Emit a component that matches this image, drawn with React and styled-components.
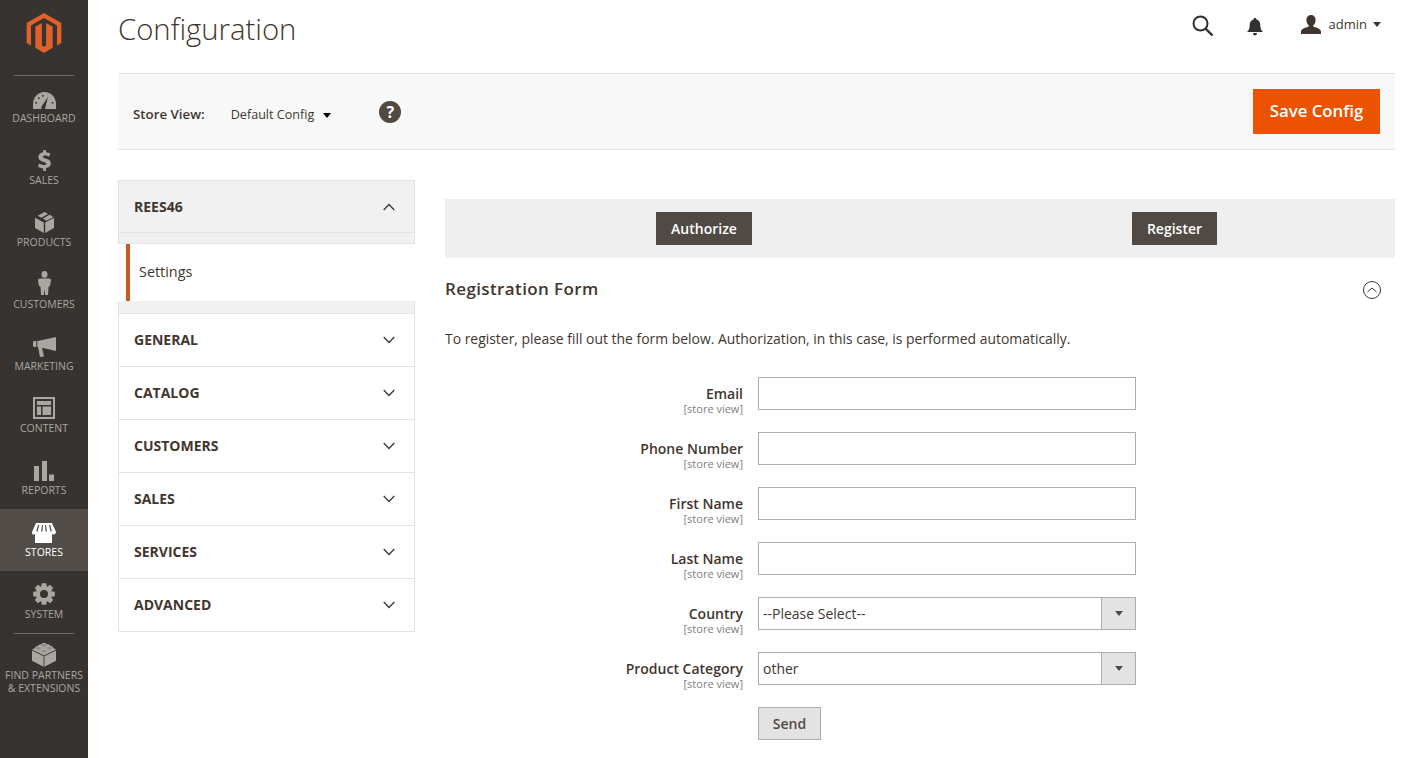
import React from "react";
import styled, { createGlobalStyle } from "styled-components";

// === styles === //

const GlobalStyle = createGlobalStyle`
  html, body {
    margin: 0;
    padding: 0;
    background: #fff;
    font-family: "Open Sans", "Liberation Sans", sans-serif;
    color: #303030;
    overflow: hidden;
  }
  * { box-sizing: border-box; }
`;

const Page = styled.div`
  display: flex;
  height: 758px;
  overflow: hidden;
`;

const Sidebar = styled.nav`
  width: 88px;
  flex: none;
  background: #373330;
`;

const LogoBox = styled.div`
  height: 75px;
  padding-top: 13px;
  display: flex;
  justify-content: center;
  align-items: flex-start;
`;

const Separator = styled.div`
  height: 1px;
  margin: 0 14px -1px;
  background: #736d68;
  position: relative;
`;

const NavItem = styled.a`
  height: 62px;
  display: flex;
  flex-direction: column;
  align-items: center;
  background: ${(p) => (p.$active ? "#524d49" : "transparent")};
  color: ${(p) => (p.$active ? "#fff" : "#aaa6a0")};
  font-size: 10.5px;
  line-height: ${(p) => (p.$tall ? 13 : 14)}px;
  text-align: center;
  text-transform: uppercase;
  white-space: nowrap;
`;

const NavIcon = styled.div`
  height: ${(p) => (p.$tall ? 36 : 34)}px;
  margin-bottom: 2px;
  display: flex;
  align-items: flex-end;
  justify-content: center;
  svg { display: block; fill: currentColor; }
`;

const Main = styled.main`
  flex: 1;
  min-width: 0;
  padding: 0 6px 0 30px;
`;

const Header = styled.header`
  height: 73px;
  display: flex;
  justify-content: space-between;
  padding-right: 14px;
`;

const Title = styled.h1`
  margin: 10px 0 0;
  font-size: 29.3px;
  line-height: 38px;
  font-weight: 300;
  color: #41362f;
`;

const Actions = styled.div`
  display: flex;
  align-items: flex-start;
  padding-top: 14px;
  color: #41362f;
`;

const SearchBtn = styled.div`
  width: 24px;
  margin-right: 32px;
`;

const BellBtn = styled.div`
  width: 16px;
  margin-top: 4px;
  margin-right: 38px;
`;

const UserBtn = styled.div`
  display: flex;
  align-items: center;
  height: 20px;
  font-size: 13px;
  color: #41362f;
`;

const UserName = styled.span`
  margin: 0 6px 0 8px;
`;

const Caret = styled.i`
  display: block;
  width: 0;
  height: 0;
  border-left: 4px solid transparent;
  border-right: 4px solid transparent;
  border-top: 5px solid ${(p) => p.$color || "#41362f"};
`;

const ScopeCaret = styled(Caret)`
  margin-top: 3px;
`;

const Toolbar = styled.div`
  height: 77px;
  display: flex;
  align-items: center;
  justify-content: space-between;
  padding: 0 15px;
  background: #f8f8f8;
  border-top: 1px solid #e3e3e3;
  border-bottom: 1px solid #e3e3e3;
`;

const ScopeGroup = styled.div`
  display: flex;
  align-items: center;
  padding-top: 4px;
`;

const ScopeLabel = styled.span`
  font-size: 13.3px;
  font-weight: 600;
  color: #41362f;
  margin-right: 26px;
`;

const ScopeValue = styled.span`
  font-size: 12.6px;
  color: #41362f;
  margin-right: 9px;
  padding-top: 2px;
`;

const Help = styled.span`
  width: 22px;
  height: 22px;
  border-radius: 50%;
  margin: -3px 0 0 48px;
  background: #514943;
  color: #fff;
  font-weight: 700;
  font-size: 16px;
  line-height: 22px;
  text-align: center;
`;

const SaveButton = styled.button`
  width: 127px;
  height: 45px;
  border: 0;
  padding: 0 0 2px;
  background: #eb5202;
  color: #fff;
  font-family: inherit;
  font-size: 16.8px;
  font-weight: 600;
`;

const Body = styled.div`
  display: flex;
  gap: 30px;
  margin-top: 30px;
`;

const Tabs = styled.aside`
  width: 297px;
  flex: none;
`;

const TabHead = styled.div`
  height: 53px;
  display: flex;
  align-items: center;
  justify-content: space-between;
  padding: 0 19px ${(p) => (p.$open ? 0 : 2)}px 15px;
  font-size: 14px;
  font-weight: 700;
  color: #41362f;
  text-transform: uppercase;
  background: ${(p) => (p.$open ? "#f1f1f1" : "#fff")};
  border: 1px solid #e3e3e3;
  border-top: ${(p) => (p.$open ? "1px solid #e3e3e3" : "0")};
  svg {
    display: block;
    margin-top: ${(p) => (p.$open ? 0 : 2)}px;
  }
`;

const TabStrip = styled.div`
  height: ${(p) => p.$h}px;
  background: #f1f1f1;
  border-left: 1px solid #e3e3e3;
  border-right: 1px solid #e3e3e3;
  border-bottom: 1px solid #e3e3e3;
`;

const TabLink = styled.div`
  height: 57px;
  margin-left: 8px;
  padding: 0 0 3px 9px;
  display: flex;
  align-items: center;
  background: #fff;
  border-left: 4px solid #c75b25;
  font-size: 14.4px;
  color: #41362f;
`;

const Content = styled.section`
  flex: 1;
  min-width: 0;
  margin-top: 19px;
`;

const AuthBar = styled.div`
  height: 59px;
  display: flex;
  align-items: center;
  gap: 380px;
  padding-left: 211px;
  background: #efefef;
`;

const DarkButton = styled.button`
  height: 33px;
  width: ${(p) => p.$w}px;
  border: 0;
  padding: 0;
  background: #514943;
  color: #fff;
  font-family: inherit;
  font-size: 14px;
  font-weight: 600;
`;

const SectionHead = styled.div`
  display: flex;
  justify-content: space-between;
  align-items: flex-start;
  height: 24px;
  margin-top: 19px;
  padding-right: 13px;
`;

const SectionTitle = styled.h2`
  margin: 0;
  font-size: 17px;
  line-height: 23px;
  font-weight: 600;
  letter-spacing: 0.38px;
  color: #41362f;
`;

const Collapse = styled.div`
  margin-top: 3px;
  svg { display: block; }
`;

const Intro = styled.p`
  margin: 28px 0 28px;
  font-size: 13.93px;
  line-height: 20px;
  color: #41362f;
`;

const Row = styled.div`
  display: flex;
  gap: 15px;
  height: 55px;
`;

const LabelCell = styled.div`
  width: 298px;
  text-align: right;
  padding-top: 7px;
`;

const FieldLabel = styled.div`
  font-size: 14px;
  line-height: 20px;
  font-weight: 600;
  color: #41362f;
`;

const Scope = styled.div`
  font-size: 11px;
  line-height: 9px;
  color: #808080;
`;

const Input = styled.input`
  width: 378px;
  height: 33px;
  border: 1px solid #adadad;
  background: #fff;
  padding: 0 4px;
  font-family: inherit;
  font-size: 14px;
`;

const SelectBox = styled.div`
  position: relative;
  width: 378px;
  height: 33px;
`;

const Select = styled.select`
  width: 100%;
  height: 100%;
  appearance: none;
  border: 1px solid #adadad;
  border-radius: 0;
  background: #fff;
  padding: 0 4px;
  font-family: inherit;
  font-size: 14px;
  color: #41362f;
`;

const SelectArrow = styled.div`
  position: absolute;
  top: 0;
  right: 0;
  width: 35px;
  height: 33px;
  display: flex;
  align-items: center;
  justify-content: center;
  background: #e3e3e3;
  border: 1px solid #adadad;
`;

const SendButton = styled.button`
  display: block;
  margin-left: 313px;
  width: 63px;
  height: 33px;
  border: 1px solid #adadad;
  background: #e3e3e3;
  color: #514943;
  font-family: inherit;
  font-size: 14px;
  font-weight: 600;
`;

// === icons === //

const MagentoLogo = () => (
  <svg width="36" height="40" viewBox="0 0 36 41.500">
    <path fill="#e0622a" d="M18 0 36 10.400V31.200L31.500 33.800V13L18 5.200 4.500 13V33.800L0 31.200V10.400Z" />
    <path fill="#e0622a" d="M15.800 10.400 9 14.300V36L18 41.500 27 36V14.300L20.200 10.400V33.800L18 35.100 15.800 33.800Z" />
  </svg>
);

const DashboardIcon = () => (
  <svg width="23" height="17" viewBox="0 0 23 17">
    <path d="M11.500 0C5 0 0 5.500 0 12v5h8.600a3 3 0 0 1 .6-3.400L15 5l-2.500 9.700a3 3 0 0 1-.6 2.300H23v-5C23 5.500 18 0 11.500 0ZM4 11.500H2.200V10H4Zm2-4.300L4.700 6 5.800 5l1.200 1.100Zm4.600-2.500H9.100V3h1.500Zm9.800 6.800h-1.800V10h1.800Z" />
  </svg>
);

const DollarIcon = () => (
  <svg width="13" height="21" viewBox="0 0 13 21">
    <path d="M5.200 0h2.700v2.300c1.600.2 3.300.7 4.300 1.300l-1 3c-1.200-.6-2.700-1.100-4.300-1.100-1.300 0-2 .4-2 1.200 0 2.100 8 1.500 8 6.600 0 2.600-1.900 4.400-5 4.800V21H5.200v-2.700c-1.800-.2-3.800-.8-5.200-1.600l1.100-3.100c1.400.8 3.300 1.500 5 1.500 1.400 0 2.200-.5 2.200-1.300C8.300 11.500.400 12.200.400 7c0-2.500 1.800-4.200 4.800-4.700Z" />
  </svg>
);

const BoxIcon = () => (
  <svg width="19" height="21" viewBox="0 0 19 21">
    <path d="M9.500 0 13 1.900 6.300 5.700 2.700 3.700ZM14.600 2.800 18.300 4.900 11.500 8.700 7.900 6.600ZM0 5.700 8.800 10.600V21L0 16.100ZM19 5.700V16.100L10.200 21V10.600Z" />
  </svg>
);

const CustomerIcon = () => (
  <svg width="13" height="24" viewBox="0 0 13 24">
    <ellipse cx="6.500" cy="3.400" rx="3" ry="3.400" />
    <path d="M2 7.500h9c1.200 0 2 .8 2 2L12 15l-1.500.8L10 24H7.200L6.500 18 5.800 24H3l-.5-8.200L1 15 0 9.500c0-1.200.8-2 2-2Z" />
  </svg>
);

const MegaphoneIcon = () => (
  <svg width="23" height="20" viewBox="0 0 23 20">
    <path d="M23 0v14L9 10.800 11 19.500 7 20 5 10H1.500C.7 10 0 9.300 0 8.500v-3C0 4.700.7 4 1.500 4H5Z" />
    <path fill="#373330" d="M3.300 4h1v6h-1Z" />
  </svg>
);

const ContentIcon = () => (
  <svg width="22" height="22" viewBox="0 0 22 22">
    <path fillRule="evenodd" d="M0 0h22v22H0ZM2 2v18h18V2Zm2 2h14v4H4Zm0 5.500h4V18H4Zm5.500 0H18V18H9.500Z" />
  </svg>
);

const ReportsIcon = () => (
  <svg width="20" height="20" viewBox="0 0 20 20">
    <path d="M0 5h5v15H0ZM8 0h5v20H8ZM15 13.500h5V20h-5Z" />
  </svg>
);

const StoreIcon = () => (
  <svg width="24" height="20" viewBox="0 0 24 20">
    <path d="M4 0h16l4 9c0 1.500-1.200 2.500-2.500 2.500-.6 0-1-.2-1.500-.5V20H3v-9c-.4.300-1 .500-1.500.5C.200 11.500-.2 10.500 0 9Z" />
    <path fill="#524d49" d="M6 2 4.200 8.500h1.400L7.300 2Zm4 0-.9 6.500h1.400L11 2Zm3 0 .5 6.500h1.400L14 2Zm4 0 1.500 6.500h1.400L18.300 2Z" />
  </svg>
);

// eight teeth around a round hole
const gearPath = () => {
  const pt = (r, a) => `${(11 + r * Math.cos(a)).toFixed(2)} ${(11 + r * Math.sin(a)).toFixed(2)}`;
  let d = "";
  for (let i = 0; i < 8; i++) {
    const a = (i * Math.PI) / 4 - Math.PI / 2;
    d += `${i ? "L" : "M"}${pt(8, a - 0.36)}L${pt(11, a - 0.2)}L${pt(11, a + 0.2)}L${pt(8, a + 0.36)}`;
  }
  return `${d}ZM11 7a4 4 0 1 0 0 8 4 4 0 0 0 0-8Z`;
};

const GearIcon = () => (
  <svg width="22" height="22" viewBox="0 0 22 22">
    <path fillRule="evenodd" d={gearPath()} />
  </svg>
);

const LegoIcon = () => (
  <svg width="24" height="24" viewBox="0 0 24 24">
    <path d="M12 0c1.500 0 2.700.6 2.900 1.400 1.300-.3 3 .2 3.100 1.300 1.700 0 3.200.9 3.200 2l.1.200L24 6.500v11.300L12 24 0 17.800V6.500L3 5c0-1.100 1.200-2 3-2 0-1.100 1.600-1.700 3-1.400C9.300.6 10.500 0 12 0Z" />
    <path fill="#373330" d="M12 12.600 24 6.500v.9L12.400 13.300V24h-.8V13.300L0 7.400v-.900Z" />
    <ellipse cx="12" cy="2.500" rx="2.600" ry="1.300" fill="#8f8b85" />
    <ellipse cx="6.500" cy="5.300" rx="2.600" ry="1.300" fill="#8f8b85" />
    <ellipse cx="17.500" cy="5.300" rx="2.600" ry="1.300" fill="#8f8b85" />
    <ellipse cx="12" cy="8.200" rx="2.600" ry="1.300" fill="#8f8b85" />
  </svg>
);

const SearchIcon = () => (
  <svg width="24" height="24" viewBox="0 0 24 24" fill="none" stroke="#303030" strokeWidth="2">
    <circle cx="9.500" cy="9.500" r="7" />
    <path d="M14.800 14.800 21.500 21.500" strokeWidth="2.400" />
  </svg>
);

const BellIcon = () => (
  <svg width="16" height="18" viewBox="0 0 16 18" fill="#303030">
    <path d="M8 0c.9 0 1.500.6 1.500 1.400C12 2 13.300 4.200 13.300 7c0 3.500.9 5.500 2.700 7H0c1.800-1.500 2.700-3.500 2.700-7 0-2.800 1.300-5 3.800-5.600C6.500.6 7.100 0 8 0ZM6 15h4c0 1.300-.9 2.500-2 2.500S6 16.300 6 15Z" />
  </svg>
);

const UserIcon = () => (
  <svg width="20" height="19" viewBox="0 0 20 19" fill="#41362f">
    <path d="M10 0c2.800 0 4.600 2 4.600 5 0 2.300-1 4.500-2.300 5.300v1.300c1 .8 7.700 1.800 7.700 5V19H0v-2.400c0-3.200 6.700-4.200 7.700-5v-1.300C6.400 9.500 5.400 7.300 5.400 5 5.400 2 7.200 0 10 0Z" />
  </svg>
);

const Chevron = ({ up }) => (
  <svg width="12" height="8" viewBox="0 0 12 8" fill="none" stroke="#41362f" strokeWidth="1.300">
    <path d={up ? "M.7 7 6 1.500 11.300 7" : "M.7 1 6 6.500 11.300 1"} />
  </svg>
);

const CircleUp = () => (
  <svg width="20" height="20" viewBox="0 0 20 20" fill="none" stroke="#41362f" strokeWidth="1">
    <circle cx="10" cy="10" r="8.500" />
    <path d="M5.500 11.800 10 8l4.500 3.800" />
  </svg>
);

// === data === //

const navItems = [
  { label: "Dashboard", icon: <DashboardIcon /> },
  { label: "Sales", icon: <DollarIcon /> },
  { label: "Products", icon: <BoxIcon /> },
  { label: "Customers", icon: <CustomerIcon /> },
  { label: "Marketing", icon: <MegaphoneIcon /> },
  { label: "Content", icon: <ContentIcon /> },
  { label: "Reports", icon: <ReportsIcon /> },
  { label: "Stores", icon: <StoreIcon />, active: true },
  { label: "System", icon: <GearIcon /> },
];

const tabs = ["General", "Catalog", "Customers", "Sales", "Services", "Advanced"];
const textFields = ["Email", "Phone Number", "First Name", "Last Name"];
const selectFields = [
  { label: "Country", value: "--Please Select--" },
  { label: "Product Category", value: "other" },
];

// === App === //

function Label({ text }) {
  return (
    <LabelCell>
      <FieldLabel>{text}</FieldLabel>
      <Scope>[store view]</Scope>
    </LabelCell>
  );
}

export default function App() {
  return (
    <>
      <GlobalStyle />
      <Page>
        <Sidebar>
          <LogoBox>
            <MagentoLogo />
          </LogoBox>
          <Separator />
          {navItems.map((item) => (
            <NavItem key={item.label} $active={item.active}>
              <NavIcon>{item.icon}</NavIcon>
              {item.label}
            </NavItem>
          ))}
          <Separator />
          <NavItem $tall>
            <NavIcon $tall><LegoIcon /></NavIcon>
            Find Partners
            <br />
            &amp; Extensions
          </NavItem>
        </Sidebar>
        <Main>
          <Header>
            <Title>Configuration</Title>
            <Actions>
              <SearchBtn><SearchIcon /></SearchBtn>
              <BellBtn><BellIcon /></BellBtn>
              <UserBtn>
                <UserIcon />
                <UserName>admin</UserName>
                <Caret />
              </UserBtn>
            </Actions>
          </Header>
          <Toolbar>
            <ScopeGroup>
              <ScopeLabel>Store View:</ScopeLabel>
              <ScopeValue>Default Config</ScopeValue>
              <ScopeCaret $color="#000" />
              <Help>?</Help>
            </ScopeGroup>
            <SaveButton>Save Config</SaveButton>
          </Toolbar>
          <Body>
            <Tabs>
              <TabHead $open>
                REES46
                <Chevron up />
              </TabHead>
              <TabStrip $h={11} />
              <TabLink>Settings</TabLink>
              <TabStrip $h={13} />
              {tabs.map((t) => (
                <TabHead key={t}>
                  {t}
                  <Chevron />
                </TabHead>
              ))}
            </Tabs>
            <Content>
              <AuthBar>
                <DarkButton $w={96}>Authorize</DarkButton>
                <DarkButton $w={85}>Register</DarkButton>
              </AuthBar>
              <SectionHead>
                <SectionTitle>Registration Form</SectionTitle>
                <Collapse><CircleUp /></Collapse>
              </SectionHead>
              <Intro>
                To register, please fill out the form below. Authorization, in this case, is performed automatically.
              </Intro>
              {textFields.map((f) => (
                <Row key={f}>
                  <Label text={f} />
                  <Input type="text" />
                </Row>
              ))}
              {selectFields.map((f) => (
                <Row key={f.label}>
                  <Label text={f.label} />
                  <SelectBox>
                    <Select defaultValue={f.value}>
                      <option>{f.value}</option>
                    </Select>
                    <SelectArrow><Caret $color="#514943" /></SelectArrow>
                  </SelectBox>
                </Row>
              ))}
              <SendButton>Send</SendButton>
            </Content>
          </Body>
        </Main>
      </Page>
    </>
  );
}
